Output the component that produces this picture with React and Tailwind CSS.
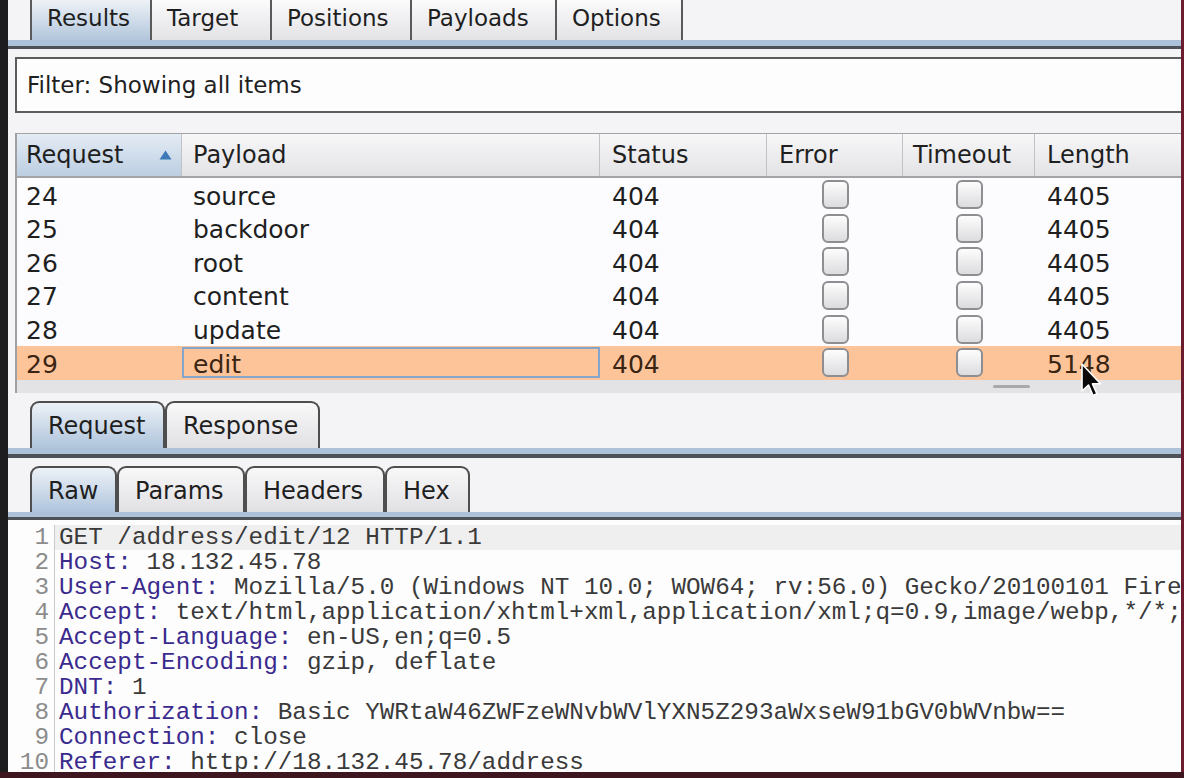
import React from "react";

const rows = [
  { id: "24", payload: "source", status: "404", len: "4405" },
  { id: "25", payload: "backdoor", status: "404", len: "4405" },
  { id: "26", payload: "root", status: "404", len: "4405" },
  { id: "27", payload: "content", status: "404", len: "4405" },
  { id: "28", payload: "update", status: "404", len: "4405" },
  { id: "29", payload: "edit", status: "404", len: "5148", sel: true },
];

const lines = [
  { v: "GET /address/edit/12 HTTP/1.1" },
  { k: "Host:", v: " 18.132.45.78" },
  { k: "User-Agent:", v: " Mozilla/5.0 (Windows NT 10.0; WOW64; rv:56.0) Gecko/20100101 Firefox/56.0" },
  { k: "Accept:", v: " text/html,application/xhtml+xml,application/xml;q=0.9,image/webp,*/*;q=0.8" },
  { k: "Accept-Language:", v: " en-US,en;q=0.5" },
  { k: "Accept-Encoding:", v: " gzip, deflate" },
  { k: "DNT:", v: " 1" },
  { k: "Authorization:", v: " Basic YWRtaW46ZWFzeWNvbWVlYXN5Z293aWxseW91bGV0bWVnbw==" },
  { k: "Connection:", v: " close" },
  { k: "Referer:", v: " http://18.132.45.78/address" },
];

function TopTab({ label, w, selected, last }) {
  const base =
    "h-full flex items-center pl-[15px] pb-[4px] text-[23px] border-l-2 border-[#5a5a5a] ";
  return (
    <div
      style={{ width: w }}
      className={
        base +
        (last ? "border-r-2 " : "") +
        (selected
          ? "bg-linear-to-b from-[#eef2f7] to-[#b2c6dc]"
          : "bg-linear-to-b from-[#fbfbfc] to-[#e3e3e6]")
      }
    >
      {label}
    </div>
  );
}

function RoundTab({ label, w, selected }) {
  return (
    <div
      style={{ width: w }}
      className={
        "h-full flex items-center pl-[16px] pt-[2px] text-[24px] border-2 border-b-0 border-[#4e4e4e] rounded-t-[9px] " +
        (selected
          ? "bg-linear-to-b from-[#edf2f7] to-[#afc4dc]"
          : "bg-linear-to-b from-[#f8f8f9] to-[#e1e1e4]")
      }
    >
      {label}
    </div>
  );
}

function Check() {
  return (
    <div className="w-[27px] h-[29px] rounded-[6px] border-2 border-[#8e8e92] bg-linear-to-b from-[#fdfdfd] to-[#dcdcdf]" />
  );
}

function Band({ blue, dark }) {
  return (
    <>
      <div style={{ height: blue }} className="bg-[#adc1d9] shrink-0" />
      <div style={{ height: dark }} className="bg-[#4f5159] shrink-0" />
    </>
  );
}

export default function App() {
  return (
    <div className="relative w-[1184px] h-[778px] overflow-hidden flex flex-col bg-[#3e1620] font-['DejaVu_Sans',sans-serif] text-[#1f1f1f]">
      <div className="flex flex-1 min-h-0">
        <div className="w-[8px] bg-[#1d1d1f]" />
        <div className="flex-1 min-w-0 flex flex-col bg-[#f4f4f6] overflow-hidden">
          {/* Top tabs */}
          <div className="h-[40px] flex pl-[22px] shrink-0">
            <TopTab label="Results" w={120} selected />
            <TopTab label="Target" w={120} />
            <TopTab label="Positions" w={140} />
            <TopTab label="Payloads" w={145} />
            <TopTab label="Options" w={128} last />
          </div>
          <Band blue={6} dark={3} />

          {/* Filter */}
          <div className="mt-[8px] ml-[7px] -mr-[6px] h-[56px] shrink-0 border-2 border-[#5c5c5c] bg-[#fdfdfe] flex items-center pl-[10px] text-[23px]">
            Filter: Showing all items
          </div>

          {/* Table */}
          <div className="mt-[20px] ml-[7px] border-l-2 border-[#a0a0a4] shrink-0">
            <div className="h-[45px] flex border-t border-b-2 border-[#a4a4a8] text-[24px] bg-linear-to-b from-[#f7f7f8] to-[#e3e3e6]">
              <div className="w-[165px] flex items-center pl-[9px] border-r border-[#c2c2c6] bg-linear-to-b from-[#e4ecf4] to-[#bccee2]">
                <span>Request</span>
                <svg className="ml-auto mr-[9px]" width="13" height="10" viewBox="0 0 13 10">
                  <path d="M6.5 0.5 L12.5 9.5 L0.5 9.5 Z" fill="#3d78b8" />
                </svg>
              </div>
              <div className="w-[418px] flex items-center pl-[11px] border-r border-[#c2c2c6]">Payload</div>
              <div className="w-[167px] flex items-center pl-[12px] border-r border-[#c2c2c6]">Status</div>
              <div className="w-[136px] flex items-center pl-[12px] border-r border-[#c2c2c6]">Error</div>
              <div className="w-[132px] flex items-center pl-[10px] border-r border-[#c2c2c6]">Timeout</div>
              <div className="flex-1 flex items-center pl-[12px]">Length</div>
            </div>
            <div className="bg-[#fcfcfe]">
              {rows.map((r) => (
                <div
                  key={r.id}
                  className={
                    "h-[33.6px] flex items-center text-[25px] pt-[3px] " +
                    (r.sel ? "bg-[#fdc49a] text-[#3a2412]" : "")
                  }
                >
                  <div className="w-[165px] pl-[9px]">{r.id}</div>
                  {r.sel ? (
                    <div className="w-[418px] h-full -mt-[3px] flex items-center pt-[3px] pl-[9px] border-2 border-[#86a5cc]">
                      {r.payload}
                    </div>
                  ) : (
                    <div className="w-[418px] pl-[11px]">{r.payload}</div>
                  )}
                  <div className="w-[167px] pl-[12px]">{r.status}</div>
                  <div className="w-[136px] flex justify-center -mt-[3px]">
                    <Check />
                  </div>
                  <div className="w-[132px] flex justify-center -mt-[3px]">
                    <Check />
                  </div>
                  <div className="flex-1 pl-[12px]">{r.len}</div>
                </div>
              ))}
            </div>
            <div className="h-[13px] bg-[#e3e3e6] flex items-center">
              <div className="ml-[976px] w-[37px] h-[3px] bg-[#a9a9ad] rounded-full" />
            </div>
          </div>

          {/* Request / Response tabs */}
          <div className="mt-[8px] h-[47px] flex pl-[22px] shrink-0">
            <RoundTab label="Request" w={135} selected />
            <RoundTab label="Response" w={155} />
          </div>
          <Band blue={6} dark={4} />

          {/* Raw / Params / Headers / Hex */}
          <div className="mt-[8px] h-[46px] flex pl-[22px] shrink-0">
            <RoundTab label="Raw" w={87} selected />
            <RoundTab label="Params" w={128} />
            <RoundTab label="Headers" w={140} />
            <RoundTab label="Hex" w={85} />
          </div>
          <Band blue={5} dark={3} />

          {/* Editor */}
          <div className="flex-1 min-h-0 bg-[#fdfdfd] pt-[5px] font-['Liberation_Mono',monospace] text-[24.3px] leading-[25px]">
            {lines.map((l, i) => (
              <div key={i} className="flex h-[25px]">
                <div className="w-[47px] shrink-0 text-right pr-[5px] text-[#8c8c8c] border-r border-[#cacaca]">
                  {i + 1}
                </div>
                <div
                  className={
                    "flex-1 pl-[4px] whitespace-pre overflow-hidden text-[#3a3a3a] " +
                    (i === 0 ? "bg-[#efeff0]" : "")
                  }
                >
                  {l.k && <span className="text-[#3a2a8e]">{l.k}</span>}
                  {l.v}
                </div>
              </div>
            ))}
          </div>
        </div>
        <div className="w-[3px] bg-[#6b1c2e]" />
      </div>
      <div className="h-[6px] bg-[#3e1620]" />

      {/* mouse cursor */}
      <svg className="absolute left-[1079px] top-[362px]" width="26" height="38" viewBox="0 0 26 38">
        <path
          d="M3 2 L3 29 L9.5 23 L14 33.5 L18 31.8 L13.5 21.8 L21.5 21.8 Z"
          fill="#0a0a0a"
          stroke="#ffffff"
          strokeWidth="1.6"
          strokeLinejoin="round"
        />
      </svg>
    </div>
  );
}
